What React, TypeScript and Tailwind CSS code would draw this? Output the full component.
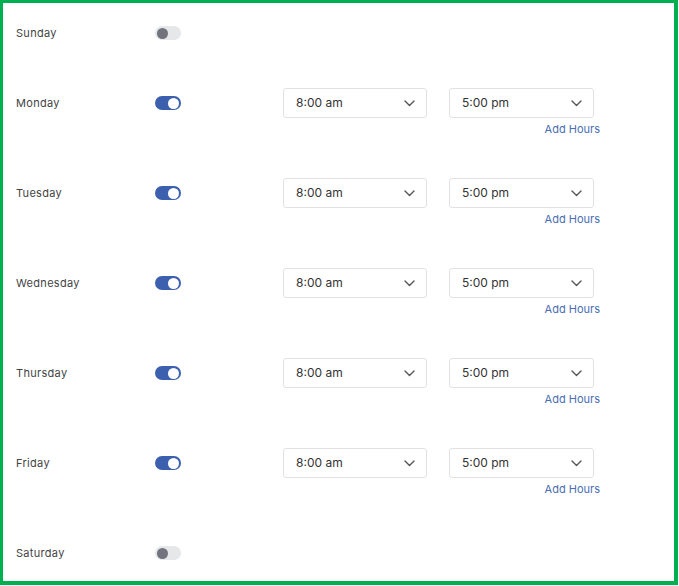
import React from "react";

const days = [
  { name: "Sunday", on: false },
  { name: "Monday", on: true },
  { name: "Tuesday", on: true },
  { name: "Wednesday", on: true },
  { name: "Thursday", on: true },
  { name: "Friday", on: true },
  { name: "Saturday", on: false },
];

function Chevron() {
  return (
    <svg width="11" height="7" viewBox="0 0 11 7" fill="none">
      <path d="M1 1l4.5 4.5L10 1" stroke="#555" strokeWidth="1.4" strokeLinecap="round" strokeLinejoin="round" />
    </svg>
  );
}

function Select({ value, w }: { value: string; w: string }) {
  return (
    <div className={`${w} h-[30px] border border-[#e2e2e2] rounded-[3px] flex items-center justify-between pl-[12px] pr-[11px] text-[12px] text-[#333]`}>
      <span>{value}</span>
      <Chevron />
    </div>
  );
}

function Toggle({ on }: { on: boolean }) {
  return on ? (
    <div className="w-[26px] h-[14px] rounded-full bg-[#3c5fae] flex items-center justify-end pr-[2px]">
      <div className="w-[11px] h-[11px] rounded-full bg-white" />
    </div>
  ) : (
    <div className="w-[26px] h-[14px] rounded-full bg-[#e6e7e9] flex items-center pl-[2px]">
      <div className="w-[11px] h-[11px] rounded-full bg-[#71737d]" />
    </div>
  );
}

export default function App() {
  return (
    <div className="w-[679px] h-[586px] bg-white" style={{ fontFamily: "Inter, 'Noto Sans', sans-serif" }}>
      <div className="w-[678px] h-[585px] border-t-[3px] border-l-[3px] border-r-[4px] border-b-[4px] border-[#00b050] pl-[13px] pt-[15px] flex flex-col gap-[40px]">
        {days.map((d) => (
          <div key={d.name} className="flex flex-col">
            <div className="flex items-center h-[30px]">
              <div className="w-[139px] text-[11px] text-[#444] tracking-[0.3px]">{d.name}</div>
              <Toggle on={d.on} />
              {d.on && (
                <div className="flex items-center gap-[22px] ml-[102px]">
                  <Select value="8:00 am" w="w-[144px]" />
                  <Select value="5:00 pm" w="w-[145px]" />
                </div>
              )}
            </div>
            {d.on && (
              <div className="h-[20px] flex items-center pt-[2px]">
                <div className="w-[584px] text-right text-[11px] text-[#4a6db3]">Add Hours</div>
              </div>
            )}
          </div>
        ))}
      </div>
    </div>
  );
}
